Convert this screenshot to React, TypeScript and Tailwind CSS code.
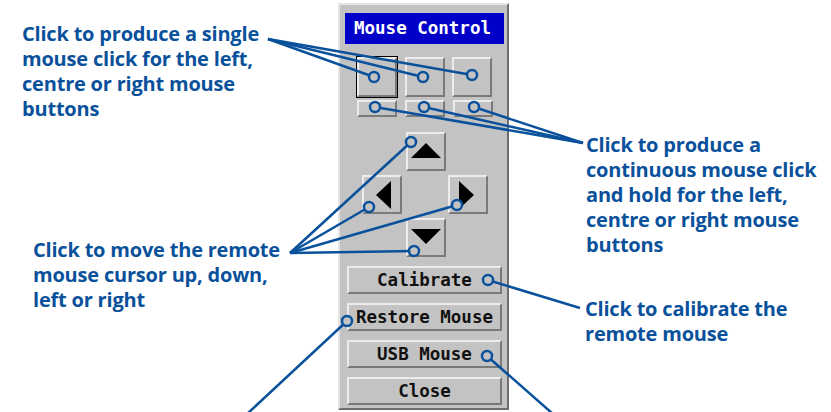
import React from 'react';

const BLUE = '#0a519c';

function Bevel({ className = '', children }: { className?: string; children?: React.ReactNode }) {
  return (
    <div
      className={`flex items-center justify-center bg-[#c3c3c3] border-2 border-t-[#ececec] border-l-[#ececec] border-r-[#7a7a7a] border-b-[#7a7a7a] ${className}`}
    >
      {children}
    </div>
  );
}

function Tri({ dir }: { dir: 'up' | 'down' | 'left' | 'right' }) {
  const pts = {
    up: '0,15 15,0 30,15',
    down: '0,0 30,0 15,15',
    left: '15,0 15,28 0,14',
    right: '0,0 0,28 15,14',
  }[dir];
  const vertical = dir === 'up' || dir === 'down';
  return (
    <svg width={vertical ? 30 : 15} height={vertical ? 15 : 28} viewBox={vertical ? '0 0 30 15' : '0 0 15 28'}>
      <polygon points={pts} fill="#000" />
    </svg>
  );
}

function Note({ className = '', lines }: { className?: string; lines: string[] }) {
  return (
    <div className={`text-[20px] leading-[25px] font-bold text-[#0a519c] font-['Open_Sans',sans-serif] tracking-[-0.2px] ${className}`}>
      {lines.map((l) => (
        <div key={l}>{l}</div>
      ))}
    </div>
  );
}

function Callouts() {
  const dot = (x: number, y: number) => (
    <circle key={`${x}-${y}`} cx={x} cy={y} r={5} fill="#c3c3c3" stroke={BLUE} strokeWidth={2.5} />
  );
  const line = (x1: number, y1: number, x2: number, y2: number) => (
    <line key={`${x1}-${y1}-${x2}-${y2}`} x1={x1} y1={y1} x2={x2} y2={y2} stroke={BLUE} strokeWidth={2.5} />
  );
  return (
    <svg className="absolute inset-0 pointer-events-none" width={831} height={412}>
      {line(268, 39, 374, 77)}
      {line(268, 39, 423, 77)}
      {line(268, 39, 472, 75)}
      {line(583, 143, 375, 107)}
      {line(583, 143, 424, 107)}
      {line(583, 143, 474, 107)}
      {line(290, 253, 411, 142)}
      {line(290, 253, 369, 207)}
      {line(290, 253, 457, 205)}
      {line(290, 253, 414, 251)}
      {line(580, 308, 488, 280)}
      {line(347, 321, 247, 414)}
      {line(487, 356, 553, 414)}
      {dot(374, 77)}
      {dot(423, 77)}
      {dot(472, 75)}
      {dot(375, 107)}
      {dot(424, 107)}
      {dot(474, 107)}
      {dot(411, 142)}
      {dot(369, 207)}
      {dot(457, 205)}
      {dot(414, 251)}
      {dot(488, 280)}
      {dot(347, 321)}
      {dot(487, 356)}
    </svg>
  );
}

function Panel() {
  const mono = "font-['DejaVu_Sans_Mono',monospace] text-[17.5px] font-bold";
  return (
    <div className="mt-[3px] w-[171px] h-[407px] bg-[#c3c3c3] border-2 border-t-[#e4e4e4] border-l-[#e4e4e4] border-r-[#6e6e6e] border-b-[#6e6e6e] flex flex-col">
      <div className={`ml-[5px] mt-[8px] w-[159px] h-[31px] bg-[#0000c8] text-white flex items-center pl-[9px] ${mono}`}>
        Mouse Control
      </div>

      <div className="ml-[16px] mt-[12px] flex items-center gap-[7px]">
        <div className="border border-black">
          <Bevel className="w-[40px] h-[40px]" />
        </div>
        <Bevel className="w-[40px] h-[40px]" />
        <Bevel className="w-[40px] h-[40px]" />
      </div>
      <div className="ml-[17px] mt-[2px] flex gap-[8px]">
        <Bevel className="w-[40px] h-[17px]" />
        <Bevel className="w-[40px] h-[17px]" />
        <Bevel className="w-[40px] h-[17px]" />
      </div>

      <Bevel className="ml-[66px] mt-[15px] w-[40px] h-[39px] pb-[2px]">
        <Tri dir="up" />
      </Bevel>
      <div className="ml-[22px] mt-[4px] flex gap-[46px]">
        <Bevel className="w-[40px] h-[39px] pl-[3px]">
          <Tri dir="left" />
        </Bevel>
        <Bevel className="w-[40px] h-[39px] pr-[3px]">
          <Tri dir="right" />
        </Bevel>
      </div>
      <Bevel className="ml-[66px] mt-[4px] w-[40px] h-[39px] pb-[2px]">
        <Tri dir="down" />
      </Bevel>

      <div className={`ml-[7px] mt-[9px] flex flex-col gap-[9px] text-[#111] ${mono}`}>
        <Bevel className="w-[155px] h-[28px]">Calibrate</Bevel>
        <Bevel className="w-[155px] h-[28px]">Restore Mouse</Bevel>
        <Bevel className="w-[155px] h-[28px]">USB Mouse</Bevel>
        <Bevel className="w-[155px] h-[28px]">Close</Bevel>
      </div>
    </div>
  );
}

export default function App() {
  return (
    <div className="relative w-[831px] h-[412px] bg-white overflow-hidden flex">
      <div className="w-[338px] flex flex-col">
        <Note
          className="ml-[22px] mt-[21px]"
          lines={['Click to produce a single', 'mouse click for the left,', 'centre or right mouse', 'buttons']}
        />
        <Note
          className="ml-[33px] mt-[116px]"
          lines={['Click to move the remote', 'mouse cursor up, down,', 'left or right']}
        />
      </div>
      <Panel />
      <div className="flex-1 flex flex-col">
        <Note
          className="ml-[77px] mt-[132px]"
          lines={['Click to produce a', 'continuous mouse click', 'and hold for the left,', 'centre or right mouse', 'buttons']}
        />
        <Note className="ml-[76px] mt-[39px]" lines={['Click to calibrate the', 'remote mouse']} />
      </div>
      <Callouts />
    </div>
  );
}
